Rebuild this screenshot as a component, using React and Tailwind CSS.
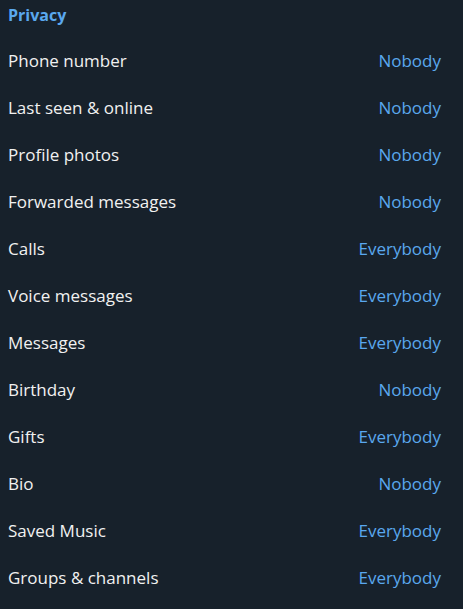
const rows = [
  ['Phone number', 'Nobody'],
  ['Last seen & online', 'Nobody'],
  ['Profile photos', 'Nobody'],
  ['Forwarded messages', 'Nobody'],
  ['Calls', 'Everybody'],
  ['Voice messages', 'Everybody'],
  ['Messages', 'Everybody'],
  ['Birthday', 'Nobody'],
  ['Gifts', 'Everybody'],
  ['Bio', 'Nobody'],
  ['Saved Music', 'Everybody'],
  ['Groups & channels', 'Everybody'],
]

export default function App() {
  return (
    <div className="w-[463px] h-[609px] bg-[#17212b] overflow-hidden font-['Open_Sans',sans-serif]">
      <div className="h-[37px] pl-2 pt-[3px] text-[16px] leading-[24px] font-bold text-[#5aa8ee]">
        Privacy
      </div>
      {rows.map(([label, value]) => (
        <div key={label} className="h-[47px] flex items-center justify-between pl-2 pr-[22px] text-[17px]">
          <span className="text-[#f1f1f1]">{label}</span>
          <span className="text-[#5aa8ee]">{value}</span>
        </div>
      ))}
    </div>
  )
}
